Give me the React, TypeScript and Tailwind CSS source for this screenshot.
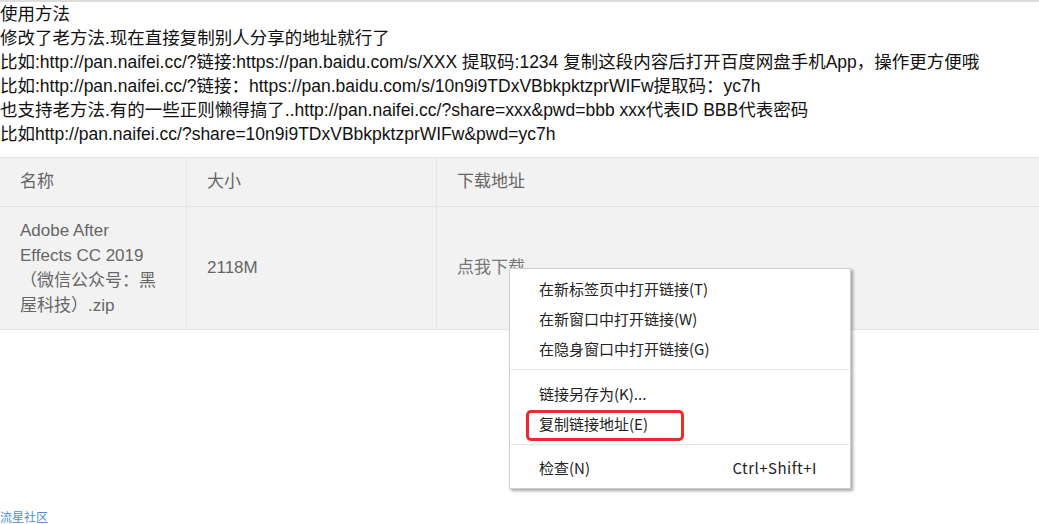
import React from 'react';

const lines = [
  '使用方法',
  '修改了老方法.现在直接复制别人分享的地址就行了',
  '比如:http://pan.naifei.cc/?链接:https://pan.baidu.com/s/XXX 提取码:1234 复制这段内容后打开百度网盘手机App，操作更方便哦',
  '比如:http://pan.naifei.cc/?链接：https://pan.baidu.com/s/10n9i9TDxVBbkpktzprWIFw提取码：yc7h',
  '也支持老方法.有的一些正则懒得搞了..http://pan.naifei.cc/?share=xxx&pwd=bbb xxx代表ID BBB代表密码',
  '比如http://pan.naifei.cc/?share=10n9i9TDxVBbkpktzprWIFw&pwd=yc7h',
];

const font = { fontFamily: '"Liberation Sans", Arial, "Noto Sans CJK SC", sans-serif' };

function MenuItem({ label, hint, boxed }: { label: string; hint?: string; boxed?: boolean }) {
  return (
    <div className="relative h-[30px] flex items-center justify-between pl-[29px] pr-[33px] text-[15px] text-[#222]">
      {boxed && <div className="absolute left-[16px] top-[1px] w-[158px] h-[31px] border-[3px] border-[#ee2b2b] rounded-[5px]" />}
      <span>{label}</span>
      {hint && <span className="tracking-[0.5px]">{hint}</span>}
    </div>
  );
}

function Separator({ after }: { after: string }) {
  return <div className={`h-px bg-[#e3e3e3] mx-px mt-[5px] ${after}`} />;
}

export default function App() {
  return (
    <div className="relative min-h-[524px] flex flex-col bg-white border-t-2 border-[#dcdcdc]" style={font}>
      {/* Notes */}
      <div className="text-[17.5px] leading-[24px] text-[#111]">
        {lines.map((l, i) => <div key={i} className="whitespace-nowrap">{l}</div>)}
      </div>

      {/* File table */}
      <div className="mt-[11px] border-t border-b border-[#e2e2e2] bg-[#f2f2f2] text-[17px] text-[#666]">
        <div className="grid grid-cols-[187px_250px_1fr] h-[49px] border-b border-[#e2e2e2]">
          <div className="flex items-center pl-[20px] border-r border-[#e6e6e6]">名称</div>
          <div className="flex items-center pl-[20px] border-r border-[#e6e6e6]">大小</div>
          <div className="flex items-center pl-[20px]">下载地址</div>
        </div>
        <div className="grid grid-cols-[187px_250px_1fr] h-[122px]">
          <div className="flex items-center pl-[20px] pr-[24px] border-r border-[#e6e6e6] leading-[25px]">
            <div>Adobe After Effects CC 2019（微信公众号：黑屋科技）.zip</div>
          </div>
          <div className="flex items-center pl-[20px] border-r border-[#e6e6e6]">2118M</div>
          <div className="flex items-center pl-[20px] text-[#777]">点我下载</div>
        </div>
      </div>

      {/* Context menu */}
      <div
        className="absolute left-[509px] top-[266px] w-[342px] bg-white border border-[#cfcfcf] py-[5px] shadow-[2px_2px_3px_rgba(0,0,0,0.35)]"
        style={{ fontFamily: '"Noto Sans CJK SC", "Liberation Sans", sans-serif' }}
      >
        <MenuItem label="在新标签页中打开链接(T)" />
        <MenuItem label="在新窗口中打开链接(W)" />
        <MenuItem label="在隐身窗口中打开链接(G)" />
        <Separator after="mb-[9px]" />
        <MenuItem label="链接另存为(K)..." />
        <MenuItem label="复制链接地址(E)" boxed />
        <Separator after="mb-[8px]" />
        <MenuItem label="检查(N)" hint="Ctrl+Shift+I" />
      </div>

      <div className="mt-auto text-[12px] leading-[14px] text-[#4a8fe0]" style={{ fontFamily: '"Noto Sans CJK SC", sans-serif' }}>
        流星社区
      </div>
    </div>
  );
}
